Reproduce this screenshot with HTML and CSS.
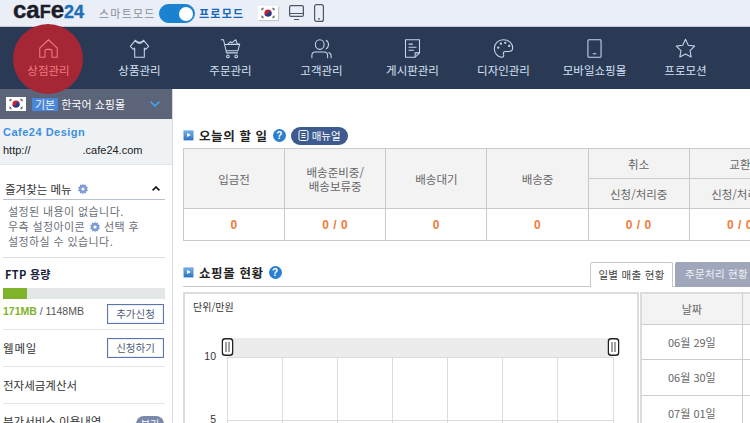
FILE: index.html
```html
<!DOCTYPE html>
<html lang="ko">
<head>
<meta charset="utf-8">
<title>Cafe24</title>
<link rel="stylesheet" href="styles.css">
</head>
<body>
<svg class="defs" width="0" height="0">
  <symbol id="flag" viewBox="0 0 20 14">
    <rect width="20" height="14" fill="#fff"/>
    <circle cx="10" cy="7" r="3.6" fill="#c8202f"/>
    <path d="M6.4 7a3.6 3.6 0 0 0 7.2 0a1.8 1.8 0 0 0-3.6 0a1.8 1.8 0 0 1-3.6 0z" fill="#1c3f94"/>
    <path d="M3 3.4l2.2-1.6M3.6 4.2l2.2-1.6M14.8 1.8l2.2 1.6M14.2 2.6l2.2 1.6M3 10.6l2.2 1.6M3.6 9.8l2.2 1.6M14.8 12.2l2.2-1.6M14.2 11.4l2.2-1.6" stroke="#222" stroke-width=".7"/>
  </symbol>
  <symbol id="gear" viewBox="0 0 12 12">
    <path d="M6 .5l1 1.7 1.9-.6.2 2 1.9.7-1 1.7 1 1.7-1.9.7-.2 2-1.9-.6-1 1.7-1-1.7-1.9.6-.2-2L1 7.7l1-1.7-1-1.7 1.9-.7.2-2 1.9.6z" fill="#7e9bd6"/>
    <circle cx="6" cy="6" r="1.6" fill="#fff"/>
  </symbol>
  <symbol id="grip" viewBox="0 0 12 18">
    <rect x=".75" y=".75" width="10.5" height="16.5" rx="3" fill="#fff" stroke="#222" stroke-width="1.5"/>
    <path d="M4.5 4v10M7.5 4v10" stroke="#444"/>
  </symbol>
</svg>

<header class="topbar">
  <div class="logo">ca<span class="logo-f">F</span>e<span class="logo-num">24</span></div>
  <span class="mode-off">스마트모드</span>
  <span class="toggle"><span class="toggle-knob"></span></span>
  <span class="mode-on">프로모드</span>
  <svg class="top-flag"><use href="#flag"/></svg>
  <svg class="top-monitor" width="15" height="16" viewBox="0 0 15 16" fill="none" stroke="#4d5666" stroke-width="1.2"><rect x=".6" y=".6" width="13.8" height="10.8" rx="1.5"/><path d="M1 8.500h13M5 14.500h5"/></svg>
  <svg class="top-phone" width="10" height="18" viewBox="0 0 10 18" fill="none" stroke="#4d5666" stroke-width="1.2"><rect x=".6" y=".6" width="8.8" height="16.8" rx="2"/><path d="M4 14.800h2"/></svg>
</header>

<nav class="nav">
  <a class="nav-item active">
    <svg class="nav-icon" viewBox="0 0 24 24" fill="none" stroke="#f07a80" stroke-width="1.2"><path d="M2 11.500L12 2l10 9.500V22h-6v-7a2 2 0 0 0-2-2h-4a2 2 0 0 0-2 2v7H2z" stroke-linejoin="round"/></svg>
    <span>상점관리</span>
  </a>
  <a class="nav-item">
    <svg class="nav-icon" viewBox="0 0 24 24" fill="none" stroke="#c9d6ee" stroke-width="1.2" stroke-linejoin="round"><path d="M7.500 2.500L1.500 9.500l3.500 3.500 1.500-1.500V22h11V11.500l1.500 1.500 3.500-3.500-6-7c-1 2.500-2.500 3.500-4.500 3.500s-3.500-1-4.500-3.500z"/><path d="M8.500 3.500c1 1 2 1.500 3.500 1.500s2.500-.5 3.500-1.500"/></svg>
    <span>상품관리</span>
  </a>
  <a class="nav-item">
    <svg class="nav-icon" viewBox="0 0 24 24" fill="none" stroke="#c9d6ee" stroke-width="1.2" stroke-linejoin="round"><path d="M1 2h3l3.500 15h13M5.500 7.500l17-.5-2 7.500H7"/><path d="M9 7l3-3 1.500 1.500L18 2l2 5"/><circle cx="9" cy="21" r="1.500"/><circle cx="18.500" cy="21" r="1.500"/></svg>
    <span>주문관리</span>
  </a>
  <a class="nav-item">
    <svg class="nav-icon" viewBox="0 0 24 24" fill="none" stroke="#c9d6ee" stroke-width="1.2"><ellipse cx="10" cy="7.500" rx="5" ry="5.500"/><path d="M1 23v-3a4 4 0 0 1 4-4h10a4 4 0 0 1 4 4v3M17 2.500c2 1 3 2.800 3 5s-1 4-3 5M20 16.500c2 .5 3 2 3 4V23"/></svg>
    <span>고객관리</span>
  </a>
  <a class="nav-item">
    <svg class="nav-icon" viewBox="0 0 24 24" fill="none" stroke="#c9d6ee" stroke-width="1.2" stroke-linejoin="round"><path d="M4 2h16v15l-5 5H4z"/><path d="M20 17h-5v5M7.500 7h5M7.500 10.500h9M7.500 14h6"/></svg>
    <span>게시판관리</span>
  </a>
  <a class="nav-item">
    <svg class="nav-icon" viewBox="0 0 24 24" fill="none" stroke="#c9d6ee" stroke-width="1.2"><path d="M12 2C5.500 2 1.500 6.500 1.500 12S5.500 22 10 22c2.500 0 2.500-2 2-3.500-.5-2 .5-3 2.500-3H18c3 0 4.500-1.500 4.500-4C22.500 6 18 2 12 2z"/><g fill="#c9d6ee" stroke="none"><circle cx="6" cy="11" r="1.300"/><circle cx="9" cy="6.500" r="1.300"/><circle cx="14" cy="5.500" r="1.300"/><circle cx="18.500" cy="9" r="1.300"/></g></svg>
    <span>디자인관리</span>
  </a>
  <a class="nav-item">
    <svg class="nav-icon" viewBox="0 0 24 24" fill="none" stroke="#c9d6ee" stroke-width="1.2"><rect x="4.500" y="2" width="15" height="20" rx="1"/><path d="M10 18h4"/></svg>
    <span>모바일쇼핑몰</span>
  </a>
  <a class="nav-item">
    <svg class="nav-icon" viewBox="0 0 24 24" fill="none" stroke="#c9d6ee" stroke-width="1.2" stroke-linejoin="round"><path d="M12 1.500l3.200 6.800 7.300 1-5.300 5.100 1.300 7.400L12 18.300l-6.500 3.500 1.300-7.400L1.500 9.300l7.300-1z"/></svg>
    <span>프로모션</span>
  </a>
</nav>

<div class="body">
  <aside class="side">
    <div class="shop-select">
      <svg class="shop-flag"><use href="#flag"/></svg>
      <span class="shop-tag">기본</span>
      <span class="shop-name">한국어 쇼핑몰</span>
      <svg class="shop-arrow" width="10" height="6" viewBox="0 0 10 6" fill="none" stroke="#4aa3e8" stroke-width="1.6"><path d="M.6.6L5 5l4.400-4.400"/></svg>
    </div>
    <div class="shop-info">
      <div class="shop-title">Cafe24 Design</div>
      <div class="shop-url"><span>http://</span><span class="shop-domain">.cafe24.com</span></div>
    </div>
    <section class="fav">
      <div class="fav-head">
        <span>즐겨찾는 메뉴</span>
        <svg class="gear"><use href="#gear"/></svg>
        <svg class="fav-caret" width="8" height="5" viewBox="0 0 8 5" fill="none" stroke="#111" stroke-width="1.600"><path d="M.6 4.400L4 1l3.400 3.400"/></svg>
      </div>
      <p class="fav-text">설정된 내용이 없습니다.<br>우측 설정아이콘 <svg class="gear"><use href="#gear"/></svg> 선택 후<br>설정하실 수 있습니다.</p>
    </section>
    <section class="ftp">
      <div class="ftp-title">FTP 용량</div>
      <div class="ftp-bar"><div class="ftp-used"></div></div>
      <div class="ftp-row">
        <span class="ftp-num"><b>171MB</b> / 1148MB</span>
        <a class="side-btn">추가신청</a>
      </div>
    </section>
    <div class="side-row mail"><span>웹메일</span><a class="side-btn">신청하기</a></div>
    <div class="side-row tax"><span>전자세금계산서</span></div>
    <div class="side-row extra"><span>부가서비스 이용내역</span><a class="side-badge">보기</a></div>
  </aside>

  <main class="main">
    <div class="title-row todo">
      <span class="bullet"></span>
      <h2>오늘의 할 일</h2>
      <span class="help">?</span>
      <a class="manual">
        <svg width="11" height="11" viewBox="0 0 11 11" fill="none" stroke="#fff"><rect x="1" y=".5" width="9" height="10" rx="1.500"/><path d="M3.500 3.500h4M3.500 5.500h4M3.500 7.500h4"/></svg>
        매뉴얼
      </a>
    </div>
    <table class="todo-table">
      <tr class="h1">
        <th rowspan="2">입금전</th>
        <th rowspan="2">배송준비중/<br>배송보류중</th>
        <th rowspan="2">배송대기</th>
        <th rowspan="2">배송중</th>
        <th>취소</th>
        <th>교환</th>
      </tr>
      <tr class="h2"><th>신청/처리중</th><th>신청/처리중</th></tr>
      <tr class="vals">
        <td>0</td><td>0 / 0</td><td>0</td><td>0</td><td>0 / 0</td><td>0 / 0</td>
      </tr>
    </table>

    <div class="title-row status">
      <span class="bullet"></span>
      <h2>쇼핑몰 현황</h2>
      <span class="help">?</span>
      <div class="tabs">
        <a class="tab on">일별 매출 현황</a>
        <a class="tab">주문처리 현황</a>
      </div>
    </div>

    <div class="panel">
      <div class="chart">
        <div class="chart-unit">단위/만원</div>
        <svg class="chart-svg" width="452" height="110" viewBox="0 0 452 110">
          <rect x="42" y="21" width="386" height="19" fill="#ececec"/>
          <path d="M42 40.500h386M42 103.500h386M42.500 40v70M97.500 40v70M152.500 40v70M207.500 40v70M262.500 40v70M317.500 40v70M372.500 40v70M428.500 40v70" stroke="#dcdcdc"/>
          <text x="31" y="43" text-anchor="end" class="axis">10</text>
          <text x="31" y="106" text-anchor="end" class="axis">5</text>
          <use href="#grip" x="36.500" y="21" width="12" height="18"/>
          <use href="#grip" x="422.500" y="21" width="12" height="18"/>
        </svg>
      </div>
      <table class="sales">
        <tr class="sales-head"><th>날짜</th><th>매출</th></tr>
        <tr class="sales-row"><td>06월 29일</td><td></td></tr>
        <tr class="sales-row"><td>06월 30일</td><td></td></tr>
        <tr class="sales-row"><td>07월 01일</td><td></td></tr>
      </table>
    </div>
  </main>
</div>
</body>
</html>
```

FILE: styles.css
```css
* { box-sizing: border-box; }
html, body { margin: 0; padding: 0; }
body {
  width: 750px;
  height: 423px;
  overflow: hidden;
  background: #fff;
  font-family: "Noto Sans CJK KR", "Liberation Sans", sans-serif;
  font-size: 11px;
  color: #444;
}
.defs { position: absolute; }
a { color: inherit; text-decoration: none; }

/* top bar */
.topbar {
  height: 27px;
  display: flex;
  align-items: center;
  background: #eaeef7;
  border-bottom: 1px solid #c4c8d0;
  padding-left: 13px;
}
.logo {
  width: 86px;
  padding-bottom: 4px;
  font-family: "Liberation Sans", sans-serif;
  font-weight: 700;
  font-size: 24px;
  line-height: 22px;
  color: #1b1d28;
  -webkit-text-stroke: .4px #1b1d28;
}
.logo-f { font-size: 18px; }
.logo-num { font-size: 18px; color: #1f6fb8; -webkit-text-stroke: .4px #1f6fb8; }
.mode-off { width: 60px; color: #8b8f98; font-size: 11px; letter-spacing: 1.2px; white-space: nowrap; }
.toggle {
  width: 36px;
  height: 19px;
  border-radius: 10px;
  background: #1b82d2;
  border: 1px solid #1b82d2;
  display: flex;
  justify-content: flex-end;
  padding: 2px 1px;
}
.toggle-knob { width: 14px; height: 14px; border-radius: 50%; background: #fff; }
.mode-on { margin-left: 4px; width: 59px; color: #1466b8; font-weight: 700; font-size: 11px; letter-spacing: 1.2px; white-space: nowrap; }
.top-flag { width: 20px; height: 14px; box-shadow: 1px 1px 1px #c3c6cc; }
.top-monitor { margin-left: 11px; }
.top-phone { margin-left: 10px; }

/* nav */
.nav {
  position: relative;
  z-index: 2;
  height: 62px;
  display: grid;
  grid-template-columns: repeat(8, 91px);
  padding-left: 3px;
  background: #2a3a55;
}
.nav-item {
  position: relative;
  display: flex;
  flex-direction: column;
  align-items: center;
  padding-top: 11px;
  color: #d5e0f2;
  font-size: 11.500px;
  line-height: 16px;
}
.nav-item.active { color: #f07a80; }
.nav-item.active::before {
  content: "";
  position: absolute;
  left: 10px;
  top: -3px;
  width: 70px;
  height: 70px;
  border-radius: 50%;
  background: #a52736;
}
.nav-icon { position: relative; width: 21px; height: 21px; margin-bottom: 3px; }
.nav-item span { position: relative; }

/* layout */
.body { display: flex; height: 334px; }
.side {
  flex: 0 0 173px;
  border-right: 1px solid #d4d9e6;
  overflow: hidden;
}
.shop-select {
  height: 30px;
  display: flex;
  align-items: center;
  padding-left: 6px;
  background: #5b6478;
  color: #fff;
}
.shop-flag { width: 20px; height: 14px; }
.shop-tag {
  margin-left: 6px;
  padding: 0 3px;
  height: 13px;
  line-height: 13px;
  background: #4a86d8;
  color: #e8f0ff;
  font-size: 11px;
}
.shop-name { margin-left: 3px; font-size: 11px; }
.shop-arrow { margin-left: auto; margin-right: 12px; }
.shop-info {
  height: 46px;
  padding: 4px 3px 0;
  background: #eef2f5;
  border-bottom: 1px solid #e3e6ea;
  font-family: "Liberation Sans", sans-serif;
  line-height: 18px;
}
.shop-title { color: #3f8fe0; font-weight: 700; font-size: 11px; letter-spacing: .5px; }
.shop-url { color: #222; font-size: 11px; display: flex; }
.shop-domain { margin-left: 52px; }

.fav { margin: 0 7px 0 3px; height: 93px; border-bottom: 1px solid #dadde4; }
.fav-head {
  height: 35px;
  padding: 13px 5px 0 2px;
  display: flex;
  align-items: center;
  gap: 5px;
  border-bottom: 1px solid #b9c1cf;
  color: #333;
  font-size: 11.500px;
}
.gear { width: 12px; height: 12px; vertical-align: -2px; }
.fav-caret { margin-left: auto; }
.fav-text { margin: 4px 0 0 5px; color: #6a6f78; font-size: 11px; line-height: 15px; letter-spacing: .4px; }

.ftp { margin: 0 7px 0 3px; height: 72px; border-bottom: 1px solid #e2e4e8; }
.ftp-title { padding: 8px 0 0 2px; font-weight: 700; color: #17213a; font-size: 11px; line-height: 17px; height: 30px; letter-spacing: .3px; }
.ftp-bar { height: 11px; background: #e3e7e8; }
.ftp-used { width: 24px; height: 100%; background: #7fb32a; }
.ftp-row { margin-top: 5px; display: flex; justify-content: space-between; align-items: flex-start; padding-right: 1px; }
.ftp-num { font-family: "Liberation Sans", sans-serif; line-height: 14px; font-size: 10.500px; color: #555; }
.ftp-num b { color: #7fb32a; }
.side-btn {
  width: 57px;
  height: 20px;
  border: 1px solid #5d76ad;
  box-shadow: inset 0 0 0 1px #e9edf5;
  color: #4b5a7c;
  font-size: 10.500px;
  line-height: 18px;
  text-align: center;
}
.side-row {
  margin: 0 7px 0 3px;
  display: flex;
  align-items: center;
  justify-content: space-between;
  padding-right: 1px;
  color: #333;
  font-size: 11.500px;
}
.mail { height: 37px; border-bottom: 1px solid #e2e4e8; letter-spacing: .8px; }
.mail .side-btn { letter-spacing: 0; }
.tax { height: 37px; border-bottom: 1px solid #e2e4e8; }
.extra { height: 36px; align-items: flex-start; padding-top: 9px; line-height: 16px; }
.side-badge {
  width: 28px;
  height: 16px;
  margin-top: 3px;
  border-radius: 8px;
  background: #7a88aa;
  color: #fff;
  font-size: 10px;
  line-height: 15px;
  text-align: center;
}

/* main */
.main { flex: 1; min-width: 0; overflow: hidden; padding-left: 10px; }
.title-row { display: flex; align-items: center; color: #222; }
.todo { height: 59px; padding-top: 34px; }
.status { height: 46px; padding-top: 18px; position: relative; border-bottom: 1px solid #c8c8c8; width: 620px; }
.bullet {
  position: relative;
  width: 11px;
  height: 11px;
  border-radius: 1px;
  background: linear-gradient(#6fb0ea, #2f74c0);
  border: 1px solid #a9c8ea;
  margin-right: 5px;
}
.bullet::after {
  content: "";
  position: absolute;
  left: 3px;
  top: 2px;
  border-left: 4px solid #fff;
  border-top: 2.500px solid transparent;
  border-bottom: 2.500px solid transparent;
}
h2 { margin: 0; font-size: 12.500px; font-weight: 700; letter-spacing: .6px; color: #222; line-height: 16px; }
.help {
  width: 13px;
  height: 13px;
  margin-left: 5px;
  border-radius: 50%;
  background: #2a7fd0;
  color: #fff;
  font: 700 10px/13px "Liberation Sans", sans-serif;
  text-align: center;
}
.manual {
  margin-left: 5px;
  width: 57px;
  height: 18px;
  border-radius: 9px;
  background: #3d5b8f;
  color: #fff;
  font-size: 10.500px;
  display: flex;
  align-items: center;
  justify-content: center;
  gap: 3px;
}

.todo-table { border-collapse: collapse; table-layout: fixed; width: 608px; border: 1px solid #d0d2d6; color: #666; font-size: 11.500px; text-align: center; }
.todo-table th, .todo-table td { padding: 0; border: 1px solid #c8cacd; font-weight: 400; }
.todo-table th { background: #f3f3f4; line-height: 14px; }
.h1 { height: 30px; }
.h2 { height: 30px; }
.vals { height: 32px; }
.vals td { color: #f07a3c; font-weight: 700; font-size: 12px; letter-spacing: .5px; font-family: "Liberation Sans", sans-serif; }

.tabs { position: absolute; left: 407px; bottom: -1px; display: flex; gap: 2px; }
.tab {
  width: 83px;
  height: 25px;
  background: #a0a7bb;
  color: #eef0f5;
  font-size: 10.500px;
  letter-spacing: .3px;
  line-height: 24px;
  text-align: center;
  border-radius: 2px 2px 0 0;
  white-space: nowrap;
}
.tab.on { background: #fff; color: #444; border: 1px solid #c8c8c8; border-bottom: 0; }

.panel { display: flex; margin-top: 5px; width: 680px; }
.chart { width: 456px; height: 131px; border: 2px solid #dcdcdc; border-bottom: 0; flex: none; overflow: hidden; }
.chart-unit { padding: 6px 0 0 8px; height: 23px; color: #333; font-size: 10px; line-height: 14px; }
.chart-svg { display: block; }
.axis { font: 10.500px "Liberation Sans", sans-serif; fill: #333; }
.sales { flex: none; margin-left: 1px; border-collapse: collapse; table-layout: fixed; width: 204px; border-left: 2px solid #dcdcdc; color: #666; font-size: 11px; text-align: center; }
.sales th, .sales td { padding: 0; border: 1px solid #ccc; font-weight: 400; }
.sales th { background: #f3f3f4; border-top: 2px solid #dcdcdc; }
.sales-head { height: 31px; }
.sales-row { height: 35.500px; }
```
